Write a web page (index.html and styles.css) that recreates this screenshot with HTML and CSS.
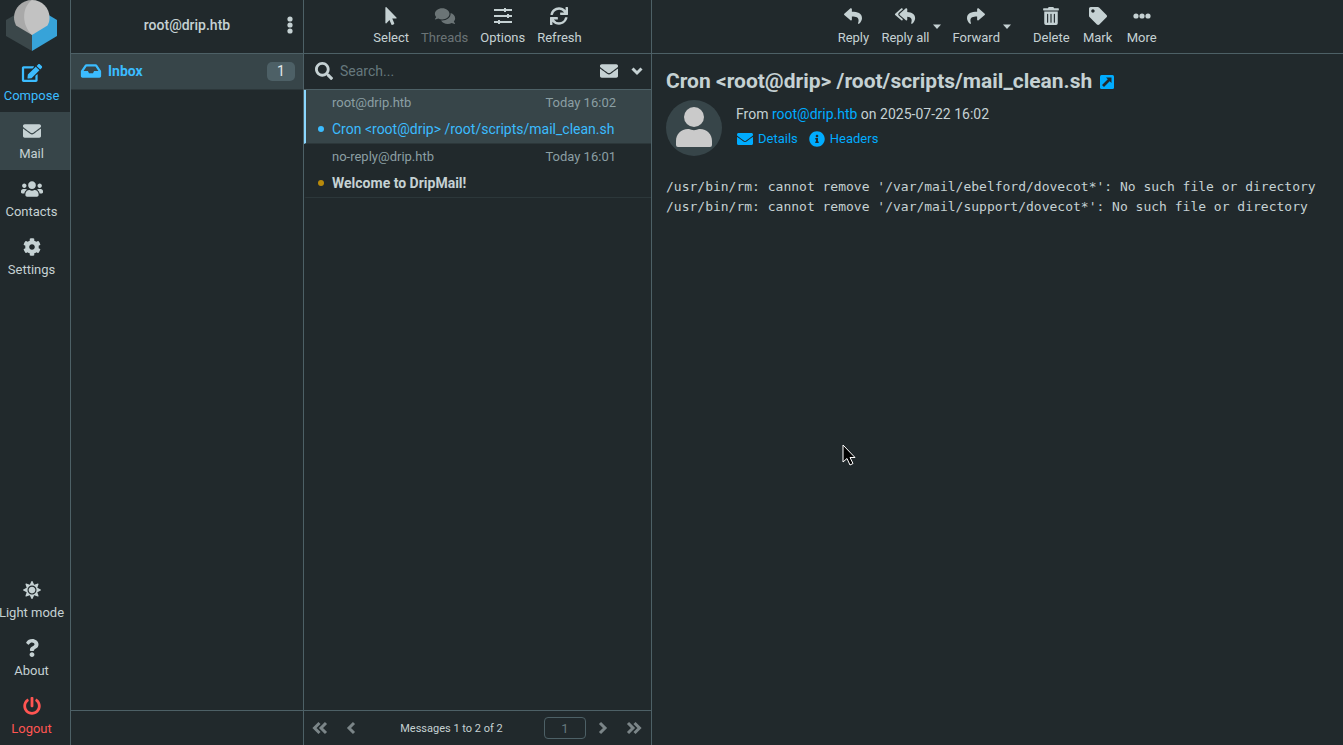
FILE: index.html
```html
<!DOCTYPE html>
<html lang="en">
<head>
    <meta charset="UTF-8">
    <meta name="viewport" content="width=device-width, initial-scale=1.0">
    <title>DripMail :: Inbox</title>
    <link rel="stylesheet" href="styles.css">
</head>
<body>
    <!-- shared icons -->
    <svg class="sprite" aria-hidden="true">
        <symbol id="envelope" viewBox="0 0 512 512"><path d="M502.3 190.8c3.9-3.1 9.7-.2 9.7 4.7V400c0 26.5-21.5 48-48 48H48c-26.5 0-48-21.5-48-48V195.6c0-5 5.7-7.8 9.7-4.7 22.4 17.4 52.1 39.5 154.1 113.6 21.1 15.4 56.7 47.8 92.2 47.6 35.7.3 72-32.8 92.3-47.6 102-74.1 131.6-96.3 154-113.7zM256 320c23.2.4 56.6-29.2 73.4-41.4 132.7-96.3 142.8-104.7 173.4-128.7 5.8-4.5 9.2-11.5 9.2-18.9v-19c0-26.5-21.5-48-48-48H48c-26.5 0-48 21.5-48 48v19c0 7.4 3.4 14.3 9.2 18.9 30.6 23.9 40.7 32.4 173.4 128.7 16.8 12.2 50.2 41.8 73.4 41.4z"/></symbol>
        <symbol id="reply" viewBox="0 0 512 512"><path d="M8.309 189.836L184.313 37.851C199.719 24.546 224 35.347 224 56.015v80.053c160.629 1.839 288 34.032 288 186.258 0 61.441-39.581 122.309-83.333 154.132-13.653 9.931-33.111-2.533-28.077-18.631 45.344-145.012-21.507-183.51-176.59-185.742V360c0 20.7-24.3 31.453-39.687 18.164l-176.004-152c-11.071-9.562-11.086-26.753 0-36.328z"/></symbol>
        <symbol id="caret" viewBox="0 0 10 6"><path d="M1 0.500h8L5 5z"/></symbol>
    </svg>

    <div class="layout">
        <nav class="taskmenu">
            <svg class="logo" viewBox="0 0 52 52">
                <path fill="#3b474a" d="M0 20 26 5v46L0 36z"/>
                <path fill="#37a3d9" d="M51 20 26 5v46l25-15z"/>
                <path fill="#a9a9a9" d="M26 0C16 0 8 8 8 17.500c0 3 1 5.500 2 8L26 35z"/>
                <path fill="#c2c2c2" d="M26 0c10 0 17.500 8 17.500 17.500 0 3-.5 5.500-2 8L26 35C16 26 15 8 26 0z"/>
            </svg>
            <a class="task compose" href="#compose">
                <svg class="icon wide" viewBox="0 0 576 512"><path d="M402.600 83.200l90.200 90.200c3.800 3.800 3.800 10 0 13.800L274.400 405.600l-92.800 10.300c-12.400 1.400-22.900-9.100-21.500-21.500l10.300-92.800L388.800 83.200c3.800-3.800 10-3.800 13.800 0zm162-22.900l-48.800-48.800c-15.200-15.200-39.900-15.200-55.200 0l-35.400 35.400c-3.800 3.800-3.800 10 0 13.800l90.200 90.200c3.800 3.800 10 3.800 13.800 0l35.400-35.400c15.200-15.300 15.200-40 0-55.200zM384 346.200V448H64V128h229.800c3.200 0 6.200-1.300 8.500-3.500l40-40c7.600-7.600 2.200-20.500-8.500-20.500H48C21.500 64 0 85.500 0 112v352c0 26.500 21.500 48 48 48h352c26.500 0 48-21.500 48-48V306.200c0-10.700-12.900-16-20.500-8.500l-40 40c-2.200 2.300-3.500 5.300-3.500 8.500z"/></svg>
                Compose
            </a>
            <a class="task selected" href="#mail">
                <svg class="icon"><use href="#envelope"/></svg>
                Mail
            </a>
            <a class="task" href="#contacts">
                <svg class="icon wide" viewBox="0 0 640 512"><path d="M96 224c35.300 0 64-28.700 64-64s-28.700-64-64-64-64 28.700-64 64 28.700 64 64 64zm448 0c35.300 0 64-28.700 64-64s-28.700-64-64-64-64 28.700-64 64 28.700 64 64 64zm32 32h-64c-17.600 0-33.500 7.100-45.100 18.600 40.300 22.100 68.900 62 75.100 109.400h66c17.700 0 32-14.300 32-32v-32c0-35.300-28.700-64-64-64zm-256 0c61.900 0 112-50.100 112-112S381.900 32 320 32 208 82.100 208 144s50.100 112 112 112zm76.800 32h-8.300c-20.800 10-43.900 16-68.500 16s-47.600-6-68.500-16h-8.300C179.600 288 128 339.600 128 403.200V432c0 26.500 21.500 48 48 48h288c26.500 0 48-21.500 48-48v-28.800c0-63.600-51.600-115.200-115.200-115.200zm-223.700-13.400C161.500 263.100 145.600 256 128 256H64c-35.300 0-64 28.700-64 64v32c0 17.700 14.300 32 32 32h65.900c6.300-47.400 34.900-87.300 75.200-109.400z"/></svg>
                Contacts
            </a>
            <a class="task" href="#settings">
                <svg class="icon" viewBox="0 0 512 512"><path d="M487.400 315.700l-42.600-24.600c4.300-23.200 4.300-47 0-70.200l42.600-24.600c4.900-2.800 7.100-8.600 5.500-14-11.100-35.600-30-67.800-54.700-94.600-3.800-4.100-10-5.100-14.800-2.300L380.800 110c-17.900-15.400-38.500-27.300-60.800-35.100V25.800c0-5.600-3.900-10.500-9.400-11.700-36.700-8.200-74.300-7.800-109.200 0-5.500 1.200-9.400 6.100-9.400 11.700V75c-22.200 7.900-42.800 19.800-60.800 35.100L88.700 85.500c-4.900-2.800-11-1.900-14.800 2.300-24.700 26.700-43.600 58.900-54.700 94.600-1.700 5.400.6 11.200 5.500 14L67.300 221c-4.300 23.200-4.300 47 0 70.200l-42.600 24.600c-4.900 2.800-7.100 8.600-5.500 14 11.100 35.600 30 67.800 54.700 94.600 3.800 4.100 10 5.100 14.800 2.300l42.600-24.600c17.900 15.400 38.500 27.300 60.800 35.100v49.200c0 5.600 3.900 10.500 9.400 11.700 36.700 8.200 74.300 7.800 109.200 0 5.500-1.200 9.400-6.100 9.400-11.700v-49.200c22.200-7.900 42.800-19.800 60.800-35.100l42.600 24.600c4.900 2.800 11 1.900 14.800-2.300 24.700-26.700 43.600-58.900 54.700-94.600 1.500-5.500-.7-11.300-5.600-14.100zM256 336c-44.100 0-80-35.900-80-80s35.900-80 80-80 80 35.900 80 80-35.900 80-80 80z"/></svg>
                Settings
            </a>
            <div class="special">
                <a class="task" href="#theme">
                    <svg class="icon" viewBox="0 0 512 512"><path d="M256 160c-52.900 0-96 43.100-96 96s43.100 96 96 96 96-43.100 96-96-43.100-96-96-96zm246.400 80.500l-94.700-47.300 33.500-100.400c4.500-13.600-8.400-26.500-21.900-21.900l-100.400 33.500-47.400-94.800c-6.400-12.800-24.600-12.800-31 0l-47.300 94.700L92.700 70.800c-13.600-4.500-26.500 8.400-21.900 21.900l33.500 100.400-94.700 47.400c-12.800 6.400-12.800 24.600 0 31l94.700 47.300-33.500 100.500c-4.500 13.600 8.400 26.500 21.900 21.900l100.400-33.500 47.300 94.700c6.400 12.800 24.600 12.800 31 0l47.300-94.700 100.400 33.500c13.600 4.500 26.500-8.400 21.900-21.900l-33.500-100.400 94.700-47.300c13-6.500 13-24.700.2-31.100zm-155.900 106c-49.900 49.900-131.100 49.900-181 0-49.900-49.900-49.900-131.100 0-181 49.900-49.900 131.100-49.900 181 0 49.900 49.900 49.900 131.100 0 181z"/></svg>
                    Light mode
                </a>
                <a class="task" href="#about">
                    <svg class="icon" viewBox="0 0 384 512"><path d="M202.021 0C122.202 0 70.503 32.703 29.914 91.026c-7.363 10.580-5.093 25.086 5.178 32.874l43.138 32.709c10.373 7.865 25.132 6.026 33.253-4.148 25.049-31.381 43.630-49.449 82.757-49.449 30.764 0 68.816 19.799 68.816 49.631 0 22.552-18.617 34.134-48.993 51.164-35.423 19.860-82.299 44.576-82.299 106.405V320c0 13.255 10.745 24 24 24h72.471c13.255 0 24-10.745 24-24v-5.773c0-42.860 125.268-44.645 125.268-160.627C377.504 66.256 286.902 0 202.021 0zM192 373.459c-38.196 0-69.271 31.075-69.271 69.271 0 38.195 31.075 69.270 69.271 69.270s69.271-31.075 69.271-69.271-31.075-69.270-69.271-69.270z"/></svg>
                    About
                </a>
                <a class="task logout" href="#logout">
                    <svg class="icon" viewBox="0 0 512 512"><path d="M400 54.100c63 45 104 118.600 104 201.900 0 136.800-110.800 247.700-247.500 248C120 504.300 8.200 393 8 256.400 7.900 173.100 48.900 99.300 111.800 54.200c11.700-8.300 28-4.800 35 7.700L162.600 90c5.900 10.500 3.100 23.800-6.600 31-41.500 30.800-68 79.600-68 134.900-.1 92.300 74.500 168.100 168 168.100 91.600 0 168.600-74.200 168-169.100-.3-51.800-24.700-101.800-68.100-134-9.700-7.200-12.400-20.500-6.500-30.900l15.800-28.100c7-12.400 23.200-16.100 34.800-7.800zM296 264V24c0-13.300-10.700-24-24-24h-32c-13.300 0-24 10.700-24 24v240c0 13.300 10.700 24 24 24h32c13.300 0 24-10.700 24-24z"/></svg>
                    Logout
                </a>
            </div>
        </nav>

        <aside class="folders">
            <header class="header">
                <span class="username">root@drip.htb</span>
                <button class="menu-button" aria-label="Folder actions">
                    <svg class="icon" viewBox="0 0 18 18"><circle cx="9" cy="3" r="2.600"/><circle cx="9" cy="9" r="2.600"/><circle cx="9" cy="15" r="2.600"/></svg>
                </button>
            </header>
            <a class="folder" href="#inbox">
                <svg class="icon wide" viewBox="0 0 576 512"><path d="M567.938 243.908L462.250 85.374A48.003 48.003 0 0 0 422.311 64H153.689a48 48 0 0 0-39.938 21.374L8.062 243.908A47.994 47.994 0 0 0 0 270.533V400c0 26.510 21.490 48 48 48h480c26.510 0 48-21.490 48-48V270.533a47.994 47.994 0 0 0-8.062-26.625zM162.252 128h251.497l85.333 128H376l-32 64H232l-32-64H76.918l85.334-128z"/></svg>
                <span>Inbox</span>
                <span class="count">1</span>
            </a>
            <footer class="footer"></footer>
        </aside>

        <section class="list">
            <header class="header toolbar">
                <button class="tool">
                    <svg class="icon" viewBox="0 0 320 512"><path d="M302.189 329.126H196.105l55.831 135.993c3.889 9.428-.555 19.999-9.444 23.999l-49.165 21.427c-9.165 4-19.443-.571-23.332-9.714l-53.053-129.136-86.664 89.138C18.729 472.710 0 463.554 0 447.977V18.299C0 1.899 19.921-6.096 30.277 5.443l284.412 292.542c11.472 11.179 3.007 31.141-12.500 31.141z"/></svg>
                    Select
                </button>
                <button class="tool" disabled>
                    <svg class="icon wide" viewBox="0 0 576 512"><path d="M416 192c0-88.400-93.100-160-208-160S0 103.600 0 192c0 34.300 14.100 65.900 38 92-13.400 30.200-35.500 54.200-35.800 54.500-2.200 2.300-2.800 5.700-1.500 8.700S4.800 352 8 352c36.600 0 66.900-12.300 88.700-25 32.200 15.700 70.300 25 111.300 25 114.900 0 208-71.600 208-160zm122 220c23.900-26 38-57.700 38-92 0-66.900-53.500-124.200-129.300-148.100.9 6.600 1.300 13.300 1.300 20.100 0 105.900-107.700 192-240 192-10.800 0-21.300-.8-31.700-1.900C207.800 439.600 281.800 480 368 480c41 0 79.100-9.200 111.300-25 21.800 12.700 52.100 25 88.700 25 3.200 0 6.100-1.900 7.300-4.800 1.300-2.900.7-6.300-1.500-8.700-.3-.3-22.400-24.200-35.800-54.500z"/></svg>
                    Threads
                </button>
                <button class="tool">
                    <svg class="icon" viewBox="0 0 18 18"><path d="M0 2h18v2H0zM0 8h18v2H0zM0 14h18v2H0zM10 1h2v4h-2zM13 7h2v4h-2zM4 13h2v4H4z"/></svg>
                    Options
                </button>
                <button class="tool">
                    <svg class="icon" viewBox="0 0 512 512"><path d="M440.650 12.570l4 82.770A247.160 247.160 0 0 0 255.830 8C134.730 8 33.910 94.920 12.290 209.820A12 12 0 0 0 24.090 224h49.050a12 12 0 0 0 11.670-9.260 175.910 175.910 0 0 1 317-56.940l-101.460-4.860a12 12 0 0 0-12.570 12v47.410a12 12 0 0 0 12 12H500a12 12 0 0 0 12-12V12a12 12 0 0 0-12-12h-47.370a12 12 0 0 0-11.980 12.570zM255.830 432a175.610 175.610 0 0 1-146-77.800l101.800 4.870a12 12 0 0 0 12.570-12v-47.400a12 12 0 0 0-12-12H12a12 12 0 0 0-12 12V500a12 12 0 0 0 12 12h47.350a12 12 0 0 0 12-12.600l-4.150-82.570A247.170 247.170 0 0 0 255.830 504c121.110 0 221.930-86.920 243.550-201.820a12 12 0 0 0-11.800-14.180h-49.050a12 12 0 0 0-11.670 9.260A175.860 175.860 0 0 1 255.830 432z"/></svg>
                    Refresh
                </button>
            </header>
            <form class="search">
                <label for="search" aria-label="Search">
                    <svg class="icon" viewBox="0 0 512 512"><path d="M505 442.700L405.300 343c-4.500-4.500-10.600-7-17-7H372c27.600-35.300 44-79.700 44-128C416 93.100 322.900 0 208 0S0 93.100 0 208s93.100 208 208 208c48.300 0 92.700-16.400 128-44v16.300c0 6.400 2.500 12.500 7 17l99.700 99.700c9.400 9.400 24.600 9.400 33.900 0l28.300-28.300c9.400-9.400 9.400-24.600.1-34zM208 336c-70.700 0-128-57.200-128-128 0-70.700 57.200-128 128-128 70.700 0 128 57.200 128 128 0 70.700-57.200 128-128 128z"/></svg>
                </label>
                <input id="search" type="text" placeholder="Search...">
                <button type="button" aria-label="Unread only"><svg class="icon"><use href="#envelope"/></svg></button>
                <button type="button" aria-label="Search options"><svg class="chevron" viewBox="0 0 12 12"><path d="M1.500 3.500 6 8l4.500-4.500"/></svg></button>
            </form>
            <ul class="messages">
                <li class="message selected">
                    <span class="from">root@drip.htb</span>
                    <span class="date">Today 16:02</span>
                    <a class="subject" href="#m2">Cron &lt;root@drip&gt; /root/scripts/mail_clean.sh</a>
                </li>
                <li class="message unread">
                    <span class="from">no-reply@drip.htb</span>
                    <span class="date">Today 16:01</span>
                    <a class="subject" href="#m1">Welcome to DripMail!</a>
                </li>
            </ul>
            <footer class="footer pager">
                <button aria-label="First page" disabled><svg viewBox="0 0 16 14"><path d="M7.500 2 2.500 7l5 5M14 2 9 7l5 5"/></svg></button>
                <button aria-label="Previous page" disabled><svg viewBox="0 0 16 14"><path d="M11 2 6 7l5 5"/></svg></button>
                <span class="range">Messages 1 to 2 of 2</span>
                <input type="text" value="1" aria-label="Page" disabled>
                <button aria-label="Next page" disabled><svg viewBox="0 0 16 14"><path d="M5 2l5 5-5 5"/></svg></button>
                <button aria-label="Last page" disabled><svg viewBox="0 0 16 14"><path d="M2 2l5 5-5 5M8.500 2l5 5-5 5"/></svg></button>
            </footer>
        </section>

        <main class="content">
            <header class="header toolbar">
                <button class="tool"><svg class="icon"><use href="#reply"/></svg>Reply</button>
                <button class="tool has-menu">
                    <svg class="icon wide" viewBox="0 0 576 512"><path d="M136.309 189.836L312.313 37.851C327.720 24.546 352 35.348 352 56.015v82.763c129.182 10.231 224 52.212 224 183.548 0 61.441-39.582 122.309-83.333 154.132-13.653 9.931-33.111-2.533-28.077-18.631 38.512-123.162-3.922-169.482-112.590-182.015v84.175c0 20.701-24.300 31.453-39.687 18.164L136.309 226.164c-11.071-9.561-11.086-26.753 0-36.328zm-128 36.328L184.313 378.150C199.700 391.439 224 380.687 224 359.986v-15.818l-108.606-93.785A55.960 55.960 0 0 1 96 207.998a55.953 55.953 0 0 1 19.393-42.380L224 71.832V56.015c0-20.667-24.280-31.469-39.687-18.164L8.309 189.836c-11.086 9.575-11.071 26.767 0 36.328z"/></svg>
                    Reply all
                </button>
                <button class="drop" aria-label="Reply all options"><svg><use href="#caret"/></svg></button>
                <button class="tool has-menu"><svg class="icon flip"><use href="#reply"/></svg>Forward</button>
                <button class="drop" aria-label="Forward options"><svg><use href="#caret"/></svg></button>
                <span class="spacer"></span>
                <button class="tool">
                    <svg class="icon" viewBox="0 0 448 512"><path d="M32 464a48 48 0 0 0 48 48h288a48 48 0 0 0 48-48V128H32zm272-256a16 16 0 0 1 32 0v224a16 16 0 0 1-32 0zm-96 0a16 16 0 0 1 32 0v224a16 16 0 0 1-32 0zm-96 0a16 16 0 0 1 32 0v224a16 16 0 0 1-32 0zM432 32H312l-9.400-18.700A24 24 0 0 0 281.100 0H166.800a23.720 23.720 0 0 0-21.400 13.300L136 32H16A16 16 0 0 0 0 48v32a16 16 0 0 0 16 16h416a16 16 0 0 0 16-16V48a16 16 0 0 0-16-16z"/></svg>
                    Delete
                </button>
                <button class="tool">
                    <svg class="icon" viewBox="0 0 512 512"><path d="M0 252.118V48C0 21.490 21.490 0 48 0h204.118a48 48 0 0 1 33.941 14.059l211.882 211.882c18.745 18.745 18.745 49.137 0 67.882L293.823 497.941c-18.745 18.745-49.137 18.745-67.882 0L14.059 286.059A48 48 0 0 1 0 252.118zM112 64c-26.510 0-48 21.490-48 48s21.490 48 48 48 48-21.490 48-48-21.490-48-48-48z"/></svg>
                    Mark
                </button>
                <button class="tool">
                    <svg class="icon" viewBox="0 0 18 18"><circle cx="3" cy="9" r="2.600"/><circle cx="9" cy="9" r="2.600"/><circle cx="15" cy="9" r="2.600"/></svg>
                    More
                </button>
            </header>
            <article class="mail">
                <h1>Cron &lt;root@drip&gt; /root/scripts/mail_clean.sh
                    <a href="#open" aria-label="Open in new window"><svg class="open" viewBox="0 0 14 14"><rect width="14" height="14" rx="1.500"/><path fill="#21292c" d="M6 2.500h5.500V8L9.700 6.200 4 12 2 10l5.800-5.700z"/></svg></a>
                </h1>
                <div class="summary">
                    <svg class="avatar" viewBox="0 0 56 56"><circle cx="28" cy="28" r="28" fill="#374549"/><circle cx="28" cy="17" r="10" fill="#cacaca"/><path fill="#cacaca" d="M10 45v-4c0-7 5-12 12-12h1c3 1.500 7 1.500 10 0h1c7 0 12 5 12 12v4q0 2-2 2H12q-2 0-2-2z"/></svg>
                    <div>
                        <p class="sender">From <a href="mailto:root@drip.htb">root@drip.htb</a> on 2025-07-22 16:02</p>
                        <p class="links">
                            <a href="#details"><svg class="small-icon"><use href="#envelope"/></svg>Details</a>
                            <a href="#headers"><svg class="small-icon" viewBox="0 0 512 512"><path d="M256 8C119.043 8 8 119.083 8 256c0 136.997 111.043 248 248 248s248-111.003 248-248C504 119.083 392.957 8 256 8zm0 110c23.196 0 42 18.804 42 42s-18.804 42-42 42-42-18.804-42-42 18.804-42 42-42zm56 254c0 6.627-5.373 12-12 12h-88c-6.627 0-12-5.373-12-12v-24c0-6.627 5.373-12 12-12h12v-64h-12c-6.627 0-12-5.373-12-12v-24c0-6.627 5.373-12 12-12h64c6.627 0 12 5.373 12 12v100h12c6.627 0 12 5.373 12 12v24z"/></svg>Headers</a>
                        </p>
                    </div>
                </div>
                <pre class="body">/usr/bin/rm: cannot remove '/var/mail/ebelford/dovecot*': No such file or directory
/usr/bin/rm: cannot remove '/var/mail/support/dovecot*': No such file or directory</pre>
            </article>
        </main>
    </div>

    <svg class="pointer" viewBox="0 0 14 23" aria-hidden="true"><path d="M1 1v17l4-3.500 3 6.500 3-1.500-3-6h5z"/></svg>
</body>
</html>
```
FILE: styles.css
```css
* {
    box-sizing: border-box;
}

body {
    margin: 0;
    background: #21292c;
    color: #c5d1d3;
    font-family: Roboto, sans-serif;
    font-size: 14px;
}

a {
    color: #00acff;
    text-decoration: none;
}

button {
    padding: 0;
    border: none;
    background: none;
    color: inherit;
    font: inherit;
    cursor: pointer;
}

svg {
    display: block;
    fill: currentColor;
}

.sprite {
    display: none;
}

.icon {
    width: 18px;
    height: 18px;
}

.icon.wide {
    width: 22px;
}

.flip {
    transform: scaleX(-1);
}

.layout {
    display: grid;
    grid-template-columns: 71px 233px 348px 1fr;
    height: 100vh;
}

.taskmenu,
.folders,
.list {
    display: flex;
    flex-direction: column;
    border-right: 1px solid #4d6066;
}

.header {
    display: flex;
    flex: none;
    height: 54px;
    border-bottom: 1px solid #4d6066;
}

.footer {
    height: 35px;
    margin-top: auto;
    border-top: 1px solid #4d6066;
}

/* Task menu */
.logo {
    width: 52px;
    height: 52px;
    margin: 0 0 2px 6px;
}

.task {
    display: flex;
    flex-direction: column;
    align-items: center;
    gap: 5px;
    height: 58px;
    padding: 10px 7px 0 0;
    color: #c5d1d3;
    font-size: 13px;
    line-height: 18px;
    white-space: nowrap;
}

.task.compose {
    color: #3bbcff;
}

.task.selected {
    background: #374549;
}

.task.logout {
    color: #ff5552;
}

.special {
    margin-top: auto;
}

/* Folder list */
.folders .header {
    align-items: center;
    padding: 0 4px 3px 22px;
}

.username {
    flex: 1;
    font-weight: 500;
    text-align: center;
}

.folder {
    display: flex;
    align-items: center;
    gap: 6px;
    height: 36px;
    padding: 0 8px 1px 9px;
    border-bottom: 1px solid #2c373a;
    background: #374549;
    color: #3bbcff;
    font-weight: 700;
}

.count {
    width: 28px;
    margin-left: auto;
    border-radius: 5px;
    background: #4d6066;
    color: #e4eaeb;
    font-weight: 400;
    line-height: 19px;
    text-align: center;
}

/* Toolbars */
.toolbar {
    justify-content: center;
}

.tool {
    display: flex;
    flex-direction: column;
    align-items: center;
    gap: 5px;
    min-width: 44px;
    padding: 7px 6px 0;
    font-size: 13px;
    line-height: 16px;
    white-space: nowrap;
}

.tool:disabled {
    color: #6b7476;
}

.tool.has-menu {
    padding-right: 2px;
}

.drop {
    margin-right: 5px;
}

.drop svg {
    width: 10px;
    height: 6px;
}

.spacer {
    width: 10px;
}

/* Search bar */
.search {
    display: flex;
    flex: none;
    align-items: center;
    height: 36px;
    padding: 0 8px 1px 11px;
    border-bottom: 1px solid #4d6066;
}

.search input {
    flex: 1;
    min-width: 0;
    padding: 0 7px;
    border: none;
    outline: none;
    background: none;
    color: inherit;
    font: inherit;
}

.search input::placeholder {
    color: #66787d;
    opacity: 1;
}

.search button + button {
    margin-left: 13px;
}

.chevron {
    width: 12px;
    height: 12px;
    fill: none;
    stroke: currentColor;
    stroke-width: 3;
}

/* Message list */
.messages {
    margin: 0;
    padding: 0;
    list-style: none;
}

.message {
    display: grid;
    grid-template-columns: 1fr auto;
    grid-template-rows: 26px 26px;
    height: 54px;
    padding: 0 35px 0 26px;
    border-bottom: 1px solid #2c373a;
    border-left: 2px solid transparent;
    line-height: 26px;
}

.message.selected {
    border-left-color: #8bd7ff;
    background: #374549;
}

.from,
.date {
    color: #8b9fa3;
    font-size: 13px;
}

.subject {
    display: flex;
    grid-column: 1 / -1;
    align-items: center;
    margin-left: -14px;
    color: #3bbcff;
    white-space: nowrap;
}

.subject::before {
    content: "";
    width: 6px;
    height: 6px;
    margin-right: 8px;
    border-radius: 50%;
    background: currentColor;
}

.unread .subject {
    color: #c5d1d3;
    font-weight: 700;
}

.unread .subject::before {
    background: #b88a0b;
}

.pager {
    display: flex;
    align-items: center;
    padding: 0 9px 0 8px;
    font-size: 11px;
}

.pager button {
    color: #7b8588;
}

.pager button + button {
    margin-left: 15px;
}

.pager svg {
    width: 16px;
    height: 14px;
    fill: none;
    stroke: currentColor;
    stroke-width: 3;
}

.range {
    flex: 1;
    text-align: center;
}

.pager input {
    width: 42px;
    height: 22px;
    margin-right: 9px;
    border: 1px solid #4d6066;
    border-radius: 4px;
    background: none;
    color: #66787d;
    font: inherit;
    font-size: 13px;
    text-align: center;
}

/* Message view */
.content {
    min-width: 0;
}

.mail {
    padding: 14px;
}

.mail h1 {
    display: flex;
    align-items: center;
    gap: 8px;
    margin: 0 0 5px;
    font-size: 21px;
    font-weight: 700;
    line-height: 27px;
}

.open {
    width: 14px;
    height: 14px;
}

.summary {
    display: flex;
    gap: 14px;
}

.avatar {
    width: 56px;
    height: 56px;
}

.summary p {
    margin: 0;
}

.sender {
    padding-top: 4px;
    line-height: 20px;
}

.links {
    display: flex;
    gap: 10px;
    padding-top: 6px;
    font-size: 13px;
    line-height: 18px;
}

.links a {
    display: flex;
    align-items: center;
    gap: 4px;
}

.small-icon {
    width: 18px;
    height: 16px;
}

.body {
    margin: 21px 0 0;
    font-family: "DejaVu Sans Mono", monospace;
    font-size: 13px;
    line-height: 20px;
}

/* Mouse pointer over the page */
.pointer {
    position: fixed;
    top: 444px;
    left: 842px;
    width: 14px;
    height: 23px;
    fill: #000;
    stroke: #fff;
}
```
